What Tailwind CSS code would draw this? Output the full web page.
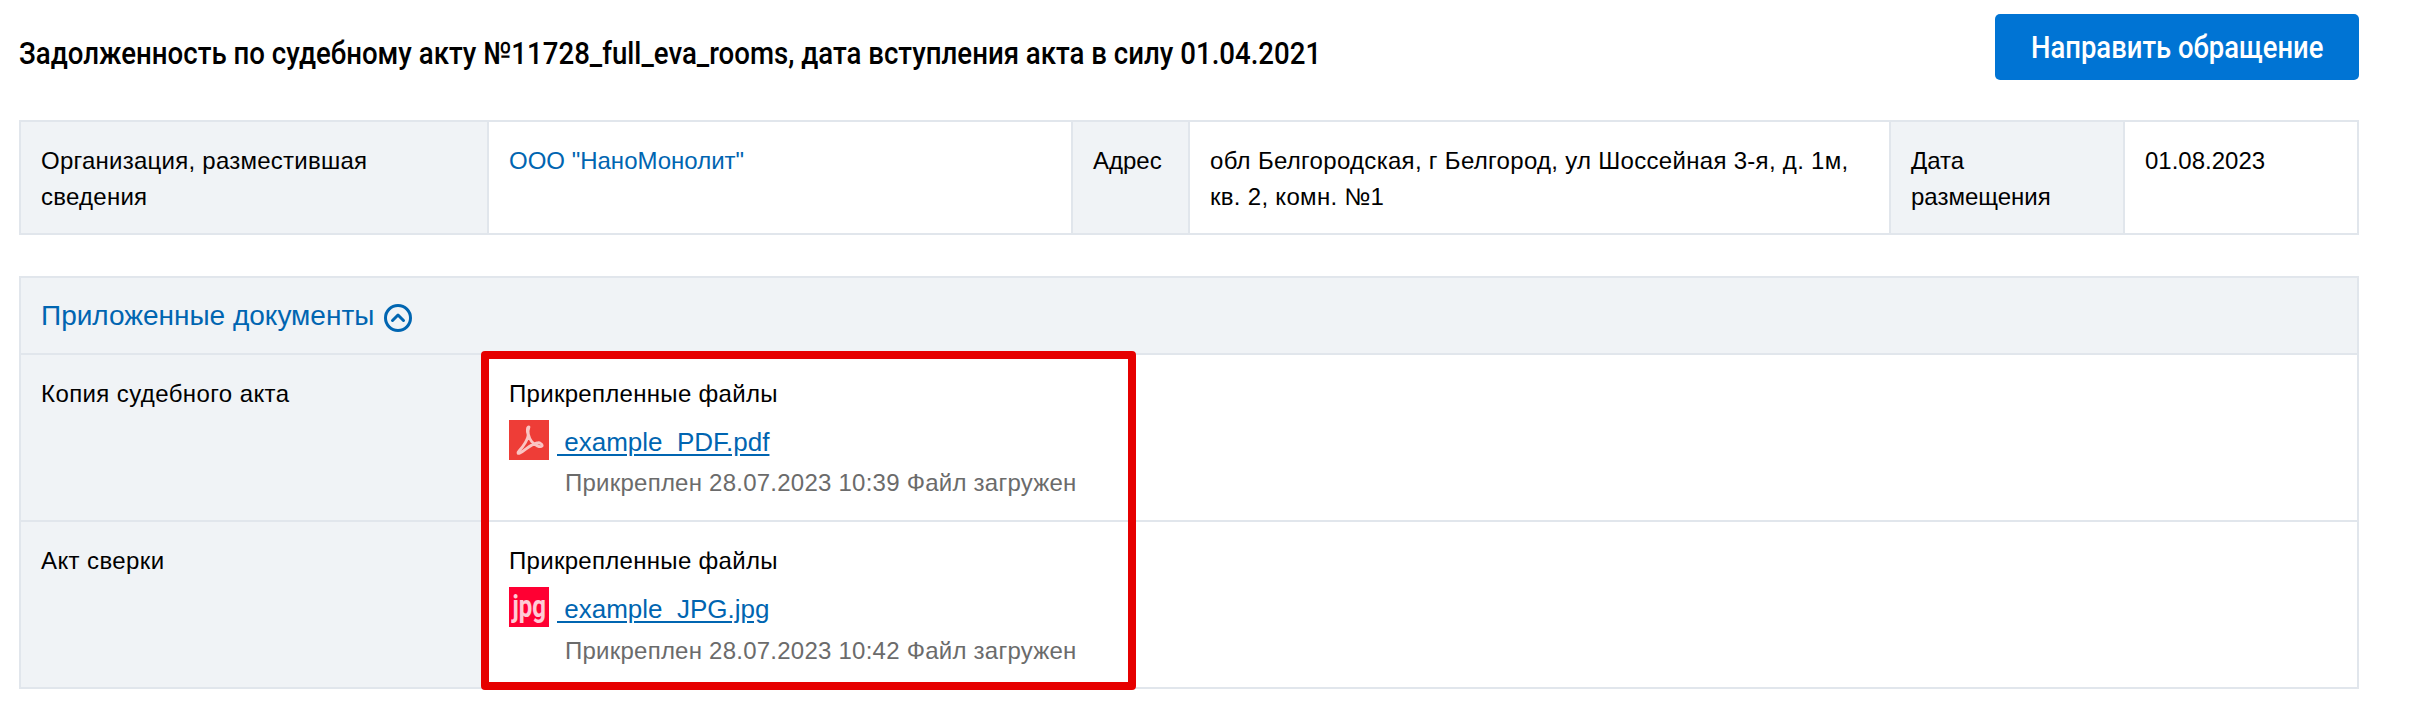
<!doctype html>
<html lang="ru">
<head>
<meta charset="utf-8">
<script src="https://cdn.jsdelivr.net/npm/@tailwindcss/browser@4"></script>
<title>Задолженность</title>
</head>
<body class="bg-white w-[2412px] h-[702px] overflow-hidden font-['Liberation_Sans',sans-serif] text-[24px] leading-[37px] text-black">
<main class="pl-[19px] w-[2359px]">
  <header class="flex items-start justify-between h-[120px]">
    <h1 class="mt-[33px] whitespace-nowrap origin-left scale-x-[0.891] font-['Roboto',sans-serif] font-medium text-[31px] leading-[42px]">Задолженность по судебному акту №11728_full_eva_rooms, дата вступления акта в силу 01.04.2021</h1>
    <a class="flex items-center justify-center mt-[14px] w-[364px] h-[66px] rounded-[5px] bg-[#0074d4] text-white font-['Roboto',sans-serif] font-medium text-[31px]"><span class="inline-block whitespace-nowrap scale-x-[0.885]">Направить обращение</span></a>
  </header>

  <section class="flex h-[115px] border-2 border-[#e1e6ec] leading-[36px]">
    <div class="w-[468px] shrink-0 bg-[#f0f3f6] border-r-2 border-[#e1e6ec] pl-5 pr-[60px] pt-[21px] tracking-[0.25px]">Организация, разместившая сведения</div>
    <div class="w-[584px] shrink-0 border-r-2 border-[#e1e6ec] px-5 pt-[21px] text-[#0065b1]">ООО "НаноМонолит"</div>
    <div class="w-[117px] shrink-0 bg-[#f0f3f6] border-r-2 border-[#e1e6ec] px-5 pt-[21px]">Адрес</div>
    <div class="w-[701px] shrink-0 border-r-2 border-[#e1e6ec] pl-5 pr-[30px] pt-[21px] tracking-[0.3px]">обл Белгородская, г Белгород, ул Шоссейная 3-я, д. 1м, кв. 2, комн. №1</div>
    <div class="w-[234px] shrink-0 bg-[#f0f3f6] border-r-2 border-[#e1e6ec] px-5 pt-[21px]">Дата размещения</div>
    <div class="flex-1 px-5 pt-[21px]">01.08.2023</div>
  </section>

  <section class="relative mt-[41px] border-2 border-[#e1e6ec]">
    <div class="flex items-center gap-[10px] h-[77px] bg-[#f0f3f6] border-b-2 border-[#e1e6ec] pl-5 text-[28px] text-[#0065b1]">
      <span>Приложенные документы</span>
      <svg class="mt-[4px]" width="28" height="28" viewBox="0 0 28 28" fill="none" stroke="#0065b1" stroke-width="3"><circle cx="14" cy="14" r="12.500"/><path d="M8.500 16.500 14 11l5.500 5.500" stroke-linecap="round" stroke-linejoin="round"/></svg>
    </div>
    <div class="flex h-[167px] border-b-2 border-[#e1e6ec]">
      <div class="w-[468px] shrink-0 bg-[#f0f3f6] border-r-2 border-[#e1e6ec] px-5 pt-[20px] tracking-[0.4px]">Копия судебного акта</div>
      <div class="flex-1 px-5 pt-[20px]">
        <div class="tracking-[0.3px]">Прикрепленные файлы</div>
        <div class="flex items-center mt-[8px] h-[40px]">
          <svg width="40" height="40" viewBox="0 0 40 40" class="shrink-0"><rect width="40" height="40" fill="#ee3d37"/><path d="M20 7c-2 0-2 4-1 7 1 4-5 13-9 17-2 2-1 3 1 2 5-2 10-9 17-10 3-1 6 2 5 3-2 2-7-1-10-4-3-4-5-10-3-15z" fill="none" stroke="#fff" stroke-opacity=".7" stroke-width="2.800" stroke-linejoin="round"/></svg>
          <a class="ml-[8px] pt-[4px] text-[#0065b1] underline underline-offset-[3px] whitespace-pre text-[26px]"> example_PDF.pdf</a>
        </div>
        <div class="pl-[56px] mt-[4px] text-[#6b6b6b] tracking-[0.24px]">Прикреплен 28.07.2023 10:39 Файл загружен</div>
      </div>
    </div>
    <div class="flex h-[165px]">
      <div class="w-[468px] shrink-0 bg-[#f0f3f6] border-r-2 border-[#e1e6ec] px-5 pt-[20px] tracking-[0.4px]">Акт сверки</div>
      <div class="flex-1 px-5 pt-[20px]">
        <div class="tracking-[0.3px]">Прикрепленные файлы</div>
        <div class="flex items-center mt-[8px] h-[40px]">
          <span class="flex items-center justify-center w-[40px] h-[40px] shrink-0 bg-[#ff0033] text-white/80 font-['Roboto',sans-serif] font-bold text-[32px] leading-none pb-[3px]"><span class="inline-block scale-x-[0.75]">jpg</span></span>
          <a class="ml-[8px] pt-[4px] text-[#0065b1] underline underline-offset-[3px] whitespace-pre text-[26px]"> example_JPG.jpg</a>
        </div>
        <div class="pl-[56px] mt-[5px] text-[#6b6b6b] tracking-[0.24px]">Прикреплен 28.07.2023 10:42 Файл загружен</div>
      </div>
    </div>
    <div class="absolute left-[460px] top-[73px] w-[655px] h-[339px] border-[8px] border-[#e60000] rounded-[4px]"></div>
  </section>
</main>
</body>
</html>
